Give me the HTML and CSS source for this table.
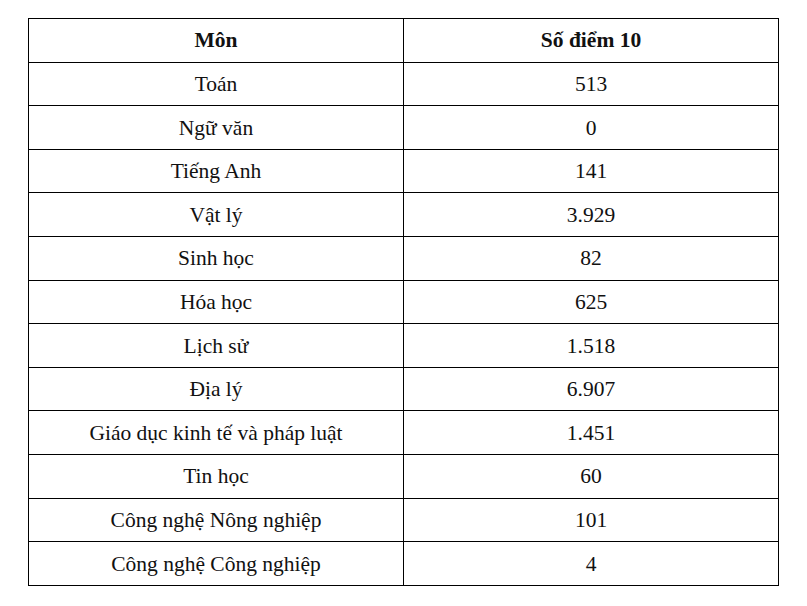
FILE: index.html
```html
<!DOCTYPE html>
<html lang="vi">
<head>
<meta charset="utf-8">
<title>Số điểm 10</title>
<link rel="stylesheet" href="styles.css">
</head>
<body>
<table class="scores">
  <thead>
    <tr><th>Môn</th><th>Số điểm 10</th></tr>
  </thead>
  <tbody>
    <tr><td>Toán</td><td>513</td></tr>
    <tr><td>Ngữ văn</td><td>0</td></tr>
    <tr><td>Tiếng Anh</td><td>141</td></tr>
    <tr><td>Vật lý</td><td>3.929</td></tr>
    <tr><td>Sinh học</td><td>82</td></tr>
    <tr><td>Hóa học</td><td>625</td></tr>
    <tr><td>Lịch sử</td><td>1.518</td></tr>
    <tr><td>Địa lý</td><td>6.907</td></tr>
    <tr><td>Giáo dục kinh tế và pháp luật</td><td>1.451</td></tr>
    <tr><td>Tin học</td><td>60</td></tr>
    <tr><td>Công nghệ Nông nghiệp</td><td>101</td></tr>
    <tr><td>Công nghệ Công nghiệp</td><td>4</td></tr>
  </tbody>
</table>
</body>
</html>
```
FILE: styles.css
```css
html, body {
  margin: 0;
  padding: 0;
  background: #fff;
}
body {
  padding: 18px 0 0 28px;
  font-family: "Liberation Serif", "Times New Roman", serif;
  font-size: 21.5px;
  color: #111;
}
.scores {
  border-collapse: collapse;
  width: 751px;
  table-layout: fixed;
}
.scores tr {
  height: 43.6px;
}
.scores th,
.scores td {
  border: 1px solid #000;
  text-align: center;
  vertical-align: middle;
  padding: 1px 0 0;
  width: 50%;
  line-height: 1.15;
}
.scores th {
  font-weight: bold;
}
```
